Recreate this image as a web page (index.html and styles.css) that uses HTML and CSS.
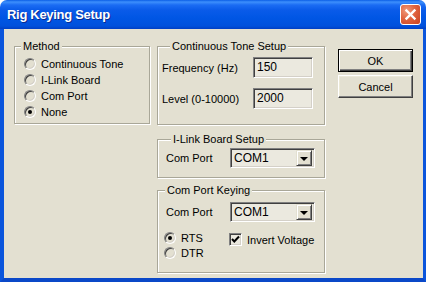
FILE: index.html
```html
<!DOCTYPE html>
<html>
<head>
    <meta charset="utf-8">
    <link rel="stylesheet" href="styles.css">
</head>
<body>
    <div class="window">
        <div class="titlebar">
            <span class="title">Rig Keying Setup</span>
            <span class="close">
                <svg width="19" height="19" viewBox="0 0 19 19">
                    <path d="M5.5 5.5 L13.5 13.5 M13.5 5.5 L5.5 13.5" stroke="#fff" stroke-width="2.4" stroke-linecap="square"/>
                </svg>
            </span>
        </div>
        <div class="client">
            <div class="group method">
                <span class="group-title">Method</span>
                <ul class="radio-list">
                    <li><span class="radio"></span>Continuous Tone</li>
                    <li><span class="radio"></span>I-Link Board</li>
                    <li><span class="radio"></span>Com Port</li>
                    <li><span class="radio checked"></span>None</li>
                </ul>
            </div>
            <div class="col-middle">
                <div class="group tone">
                    <span class="group-title">Continuous Tone Setup</span>
                    <div class="field-row">
                        <label>Frequency (Hz)</label>
                        <span class="textbox">150</span>
                    </div>
                    <div class="field-row second">
                        <label>Level (0-10000)</label>
                        <span class="textbox">2000</span>
                    </div>
                </div>
                <div class="group ilink">
                    <span class="group-title">I-Link Board Setup</span>
                    <div class="combo-row">
                        <label>Com Port</label>
                        <span class="combo">
                            <span class="combo-text">COM1</span>
                            <span class="combo-btn"><span class="arrow"></span></span>
                        </span>
                    </div>
                </div>
                <div class="group keying">
                    <span class="group-title">Com Port Keying</span>
                    <div class="combo-row">
                        <label>Com Port</label>
                        <span class="combo">
                            <span class="combo-text">COM1</span>
                            <span class="combo-btn"><span class="arrow"></span></span>
                        </span>
                    </div>
                    <div class="line-options">
                        <ul class="radio-list small">
                            <li><span class="radio checked"></span>RTS</li>
                            <li><span class="radio"></span>DTR</li>
                        </ul>
                        <div class="check-item">
                            <span class="checkbox">
                                <svg width="11" height="11" viewBox="0 0 11 11">
                                    <path d="M2 5 L4.3 7.5 L9 2.5" fill="none" stroke="#000" stroke-width="2"/>
                                </svg>
                            </span>
                            Invert Voltage
                        </div>
                    </div>
                </div>
            </div>
            <div class="buttons">
                <button class="btn default">OK</button>
                <button class="btn">Cancel</button>
            </div>
        </div>
    </div>
</body>
</html>
```

FILE: styles.css
```css
* {
    padding: 0;
    margin: 0;
    box-sizing: border-box;
}
body {
    background: #ffffff;
    font-family: "Liberation Sans", Arial, sans-serif;
    font-size: 11px;
    color: #000;
}
.window {
    width: 426px;
    height: 282px;
    display: flex;
    flex-direction: column;
}
.titlebar {
    height: 29px;
    display: flex;
    align-items: center;
    justify-content: space-between;
    padding: 0 5px 0 7px;
    border-radius: 7px 7px 0 0;
    background: linear-gradient(to bottom, #0b5ee6 0px, #3d8ffc 2px, #1b6cf3 5px, #0a5be9 10px, #0056e4 18px, #0051dc 26px, #003fc4 29px);
}
.title {
    color: #fff;
    font-weight: bold;
    font-size: 13px;
    text-shadow: 1px 1px #0b2c8f;
    letter-spacing: -0.3px;
}
.close {
    width: 21px;
    height: 21px;
    border: 1px solid #fff;
    border-radius: 3px;
    display: flex;
    align-items: center;
    justify-content: center;
    background: radial-gradient(circle at 30% 30%, #f09a7c 0%, #e06440 45%, #c8401f 100%);
}
.client {
    flex: 1;
    display: flex;
    align-items: flex-start;
    padding-left: 10px;
    background: #e3e0d1;
    border-left: 4px solid #0a55dc;
    border-right: 3px solid #0a55dc;
    border-bottom: 4px solid #0a48c8;
}

/* group boxes */
.group {
    border: 1px solid #a9a798;
    box-shadow: inset 1px 1px #fff, 1px 1px #fff;
}
.group-title {
    display: block;
    width: fit-content;
    height: 13px;
    line-height: 13px;
    margin-top: -7px;
    padding: 0 2px;
    background: #e3e0d1;
}
.method {
    width: 136px;
    height: 78px;
    margin-top: 17px;
}
.method .group-title {
    margin-left: 6px;
}
.col-middle {
    width: 168px;
    margin-left: 7px;
    margin-top: 17px;
}
.tone {
    height: 79px;
    padding-left: 4px;
}
.tone .group-title {
    margin-left: 8px;
}
.ilink {
    height: 39px;
    margin-top: 14px;
    padding-left: 8px;
}
.ilink .group-title {
    margin-left: 5px;
}
.keying {
    height: 83px;
    margin-top: 12px;
    padding-left: 6px;
}
.keying .group-title {
    margin-left: 1px;
}

/* radios */
.radio-list {
    list-style-type: none;
    margin: 3px 0 0 9px;
}
.radio-list li {
    height: 16px;
    display: flex;
    align-items: center;
}
.radio-list.small {
    margin: 0;
}
.radio-list.small li {
    height: 15px;
}
.radio {
    width: 12px;
    height: 12px;
    margin-right: 5px;
    border-radius: 50%;
    border: 1px solid;
    border-color: #808080 #fff #fff #808080;
    box-shadow: inset 1px 1px #404040, inset -1px -1px #d4d0c8;
    display: flex;
    align-items: center;
    justify-content: center;
}
.radio.checked::after {
    content: "";
    width: 4px;
    height: 4px;
    border-radius: 50%;
    background: #000;
}

/* text fields */
.field-row {
    display: grid;
    grid-template-columns: 91px 60px;
    align-items: center;
    margin-top: 4px;
    height: 21px;
}
.field-row.second {
    margin-top: 10px;
}
.textbox {
    height: 21px;
    padding: 0 3px;
    line-height: 19px;
    font-size: 12px;
    background: #ebe9df;
    border: 1px solid;
    border-color: #808080 #fff #fff #808080;
    box-shadow: inset 1px 1px #404040, inset -1px -1px #d4d0c8;
}

/* combo boxes */
.combo-row {
    display: grid;
    grid-template-columns: 64px 85px;
    align-items: center;
    margin-top: 2px;
}
.keying .combo-row {
    margin-top: 5px;
    padding-left: 2px;
}
.combo {
    height: 20px;
    display: flex;
    align-items: center;
    padding: 2px;
    background: #ebe9df;
    border: 1px solid;
    border-color: #808080 #fff #fff #808080;
    box-shadow: inset 1px 1px #404040, inset -1px -1px #d4d0c8;
}
.combo-text {
    flex: 1;
    padding-left: 1px;
    font-size: 12px;
}
.combo-btn {
    width: 16px;
    height: 16px;
    display: flex;
    align-items: center;
    justify-content: center;
    background: #e3e0d1;
    border: 1px solid;
    border-color: #e3e0d1 #404040 #404040 #e3e0d1;
    box-shadow: inset 1px 1px #fff, inset -1px -1px #808080;
}
.arrow {
    width: 0;
    height: 0;
    border-left: 4px solid transparent;
    border-right: 4px solid transparent;
    border-top: 4px solid #000;
    margin-top: 1px;
}

/* rts / dtr + invert */
.line-options {
    display: flex;
    align-items: flex-start;
    margin-top: 8px;
}
.line-options .radio-list {
    width: 65px;
}
.check-item {
    display: flex;
    align-items: center;
    margin-top: 3px;
}
.checkbox {
    width: 13px;
    height: 13px;
    margin-right: 5px;
    display: flex;
    align-items: center;
    justify-content: center;
    background: #ebe9df;
    border: 1px solid;
    border-color: #808080 #fff #fff #808080;
    box-shadow: inset 1px 1px #404040, inset -1px -1px #d4d0c8;
}

/* buttons */
.buttons {
    width: 75px;
    margin: 20px 0 0 13px;
    display: flex;
    flex-direction: column;
    gap: 3px;
}
.btn {
    height: 23px;
    font-family: "Liberation Sans", Arial, sans-serif;
    font-size: 11px;
    color: #000;
    background: #e3e0d1;
    border: 1px solid;
    border-color: #fff #404040 #404040 #fff;
    box-shadow: inset -1px -1px #808080, inset 1px 1px #ece9d8;
}
.btn.default {
    border: 1px solid #000;
    box-shadow: inset 1px 1px #fff, inset -1px -1px #404040, inset -2px -2px #808080;
}
```
